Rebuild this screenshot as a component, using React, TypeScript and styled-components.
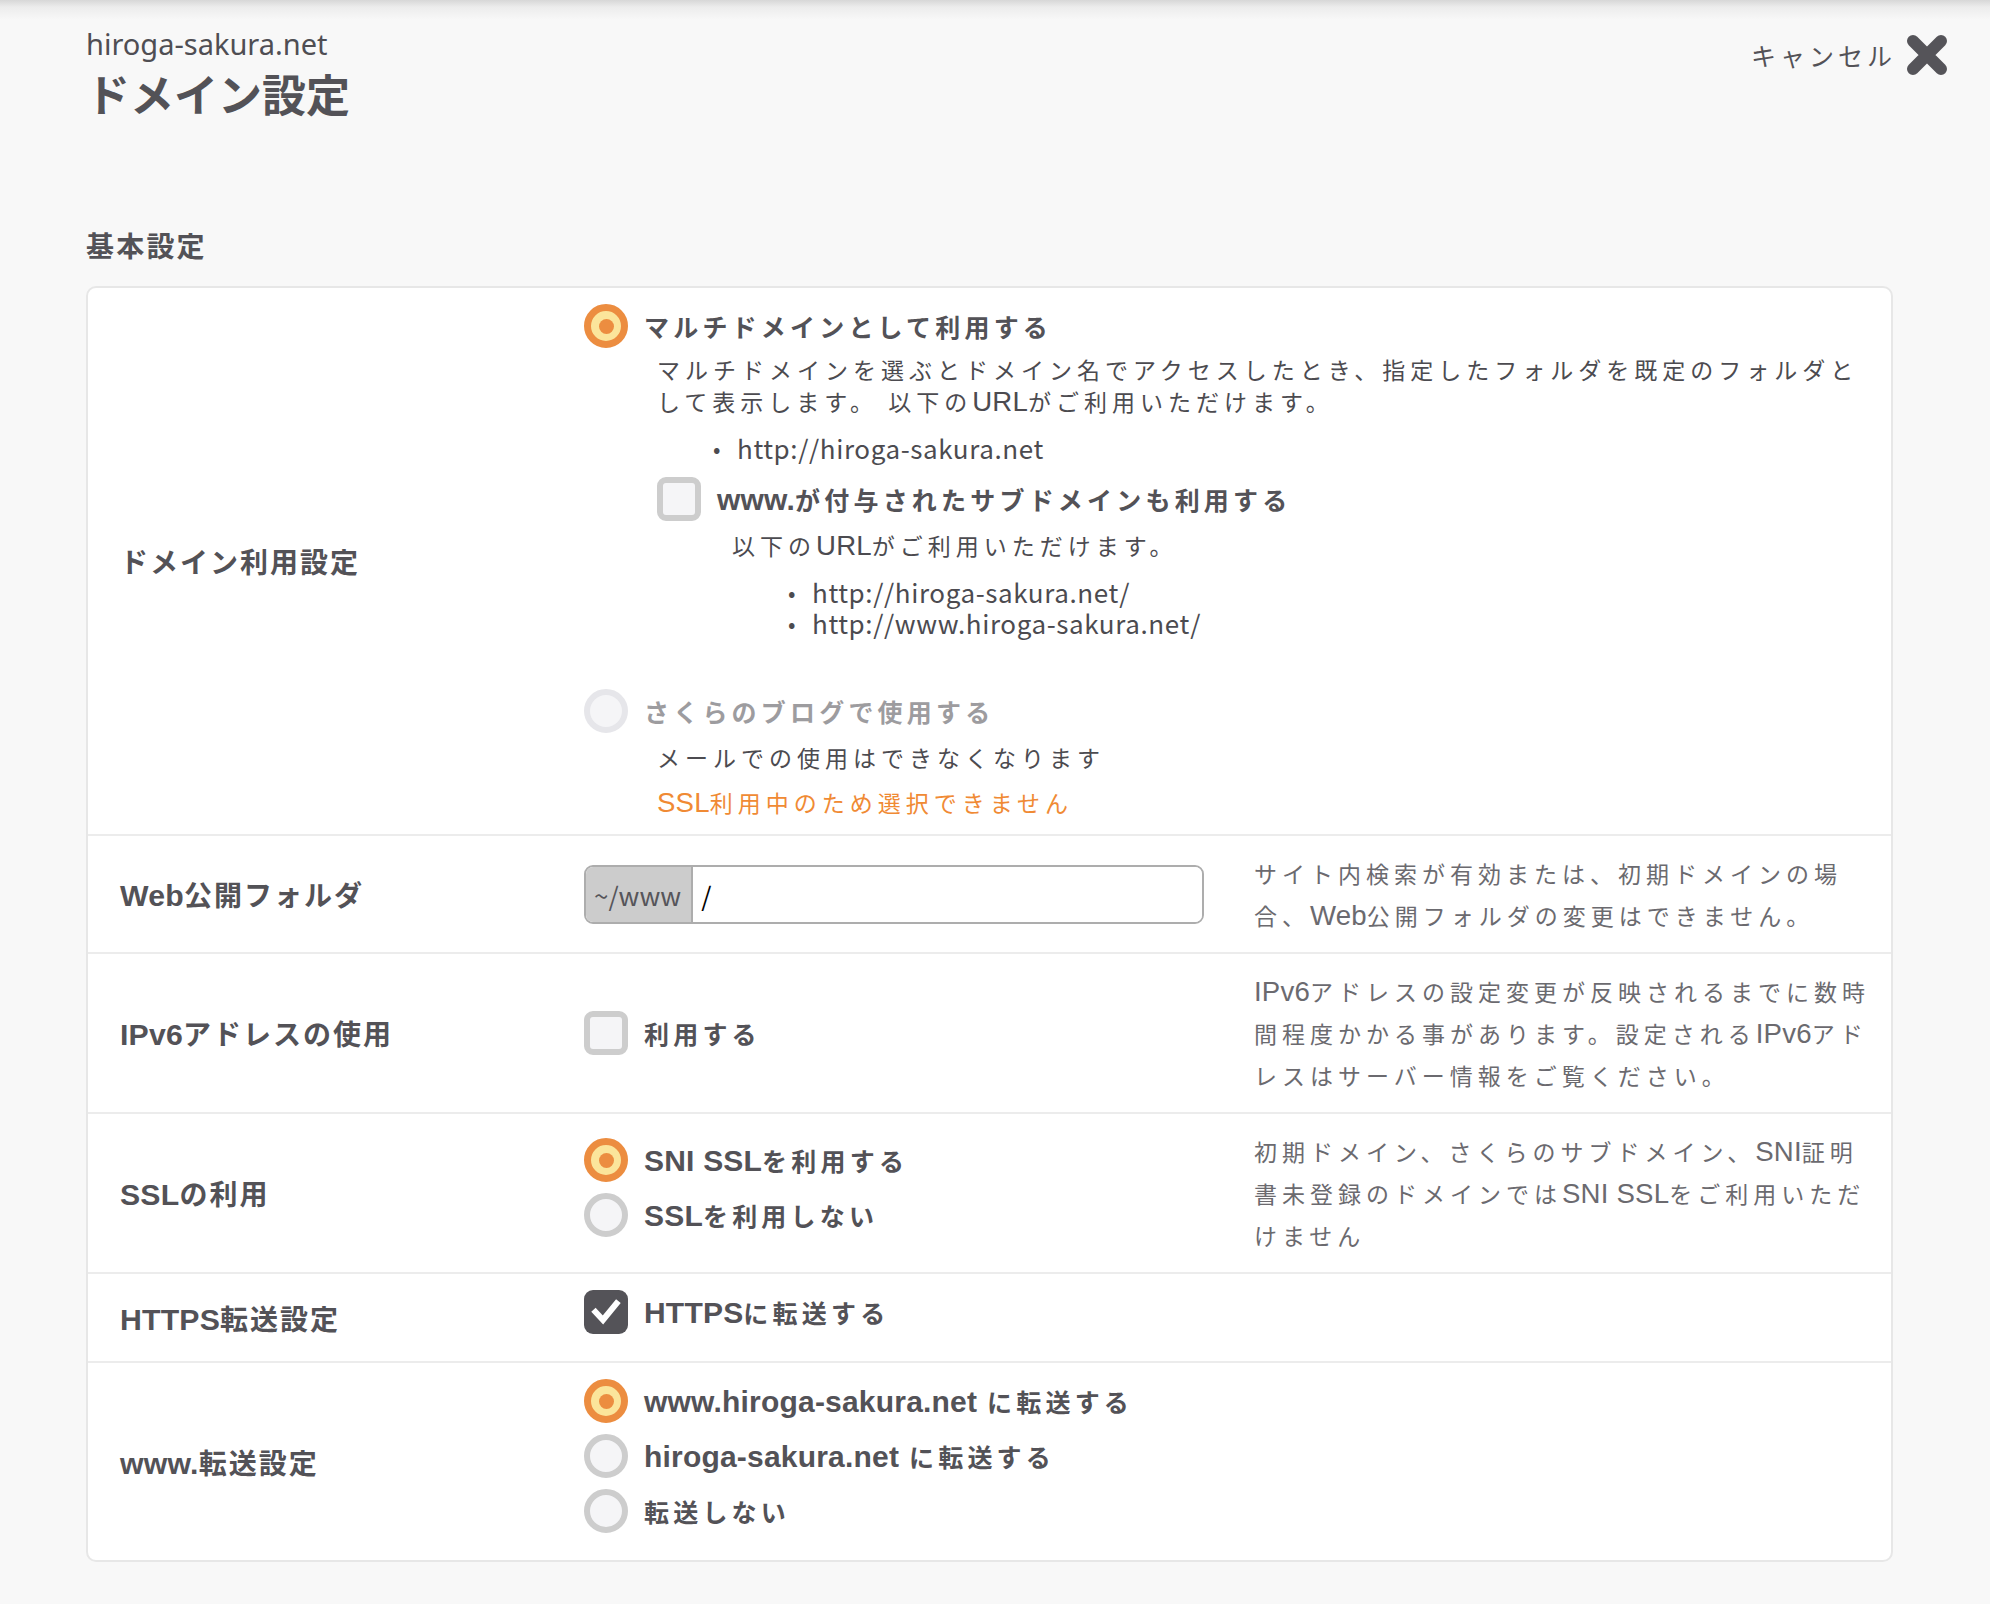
import React from 'react';
import styled, { createGlobalStyle } from 'styled-components';

const GlobalStyle = createGlobalStyle`
  html, body {
    margin: 0;
    background: #f8f8f8;
  }
  body {
    font-family: "Noto Sans CJK JP", "Noto Sans", sans-serif;
    color: #535257;
  }
  * { box-sizing: border-box; }
`;

type RadioState = 'on' | 'off' | 'disabled';

const CloseIcon = () => (
  <svg width="42" height="42" viewBox="0 0 42 42">
    <path d="M7 7 L35 35 M35 7 L7 35" stroke="#555459" strokeWidth="12" strokeLinecap="round" />
  </svg>
);

const CheckMark = () => (
  <svg width="32" height="32" viewBox="0 0 32 32">
    <path d="M5.5 16 L13 24 L26.5 7.5" stroke="#fff" strokeWidth="6" fill="none" strokeLinecap="square" />
  </svg>
);

export default function App() {
  return (
    <Page>
      <GlobalStyle />
      <Header>
        <div>
          <SiteName>hiroga-sakura.net</SiteName>
          <Title>ドメイン設定</Title>
        </div>
        <CancelButton type="button">
          <CancelLabel>キャンセル</CancelLabel>
          <CloseIcon />
        </CancelButton>
      </Header>

      <SectionTitle>基本設定</SectionTitle>

      <Card>
        <Row>
          <Label>ドメイン利用設定</Label>
          <Control $wide>
            <Choice>
              <Radio $state="on" />
              <ChoiceText>マルチドメインとして利用する</ChoiceText>
            </Choice>
            <Indent $left={73}>
              <Note $top={5}>
                マルチドメインを選ぶとドメイン名でアクセスしたとき、指定したフォルダを既定のフォルダとして表示します。 以下の<Latin>URL</Latin>がご利用いただけます。
              </Note>
              <UrlList $top={15}>
                <UrlItem>http://hiroga-sakura.net</UrlItem>
              </UrlList>
              <Choice $top={14}>
                <Checkbox />
                <ChoiceText>
                  <Latin>www.</Latin>が付与されたサブドメインも利用する
                </ChoiceText>
              </Choice>
              <Indent $left={75}>
                <Note $top={8}>
                  以下の<Latin>URL</Latin>がご利用いただけます。
                </Note>
                <UrlList $top={15}>
                  <UrlItem>http://hiroga-sakura.net/</UrlItem>
                  <UrlItem>http://www.hiroga-sakura.net/</UrlItem>
                </UrlList>
              </Indent>
            </Indent>
            <Choice $top={51}>
              <Radio $state="disabled" />
              <ChoiceText $muted>さくらのブログで使用する</ChoiceText>
            </Choice>
            <Indent $left={73}>
              <Note $top={8}>メールでの使用はできなくなります</Note>
              <Warning>
                <Latin>SSL</Latin>利用中のため選択できません
              </Warning>
            </Indent>
          </Control>
        </Row>

        <Row>
          <Label>
            <Latin $size={1.08}>Web</Latin>公開フォルダ
          </Label>
          <Control>
            <PathField>
              <PathPrefix>~/www</PathPrefix>
              <PathInput defaultValue="/" />
            </PathField>
          </Control>
          <Help>
            サイト内検索が有効または、初期ドメインの場合、<Latin>Web</Latin>公開フォルダの変更はできません。
          </Help>
        </Row>

        <Row>
          <Label>
            <Latin $size={1.08}>IPv6</Latin>アドレスの使用
          </Label>
          <Control>
            <ChoiceList $flush>
              <Choice>
                <Checkbox />
                <ChoiceText>利用する</ChoiceText>
              </Choice>
            </ChoiceList>
          </Control>
          <Help>
            <Latin>IPv6</Latin>アドレスの設定変更が反映されるまでに数時間程度かかる事があります。設定される<Latin>IPv6</Latin>アドレスはサーバー情報をご覧ください。
          </Help>
        </Row>

        <Row>
          <Label>
            <Latin $size={1.08}>SSL</Latin>の利用
          </Label>
          <Control>
            <ChoiceList>
              <Choice>
                <Radio $state="on" />
                <ChoiceText>
                  <Latin>SNI SSL</Latin>を利用する
                </ChoiceText>
              </Choice>
              <Choice>
                <Radio $state="off" />
                <ChoiceText>
                  <Latin>SSL</Latin>を利用しない
                </ChoiceText>
              </Choice>
            </ChoiceList>
          </Control>
          <Help>
            初期ドメイン、さくらのサブドメイン、<Latin>SNI</Latin>証明書未登録のドメインでは<Latin>SNI SSL</Latin>をご利用いただけません
          </Help>
        </Row>

        <Row>
          <Label>
            <Latin $size={1.08}>HTTPS</Latin>転送設定
          </Label>
          <Control>
            <ChoiceList>
              <Choice>
                <Checkbox $checked>
                  <CheckMark />
                </Checkbox>
                <ChoiceText>
                  <Latin>HTTPS</Latin>に転送する
                </ChoiceText>
              </Choice>
            </ChoiceList>
          </Control>
          <Help />
        </Row>

        <Row>
          <Label>
            <Latin $size={1.08}>www.</Latin>転送設定
          </Label>
          <Control>
            <ChoiceList>
              <Choice>
                <Radio $state="on" />
                <ChoiceText>
                  <Latin>www.hiroga-sakura.net</Latin> に転送する
                </ChoiceText>
              </Choice>
              <Choice>
                <Radio $state="off" />
                <ChoiceText>
                  <Latin>hiroga-sakura.net</Latin> に転送する
                </ChoiceText>
              </Choice>
              <Choice>
                <Radio $state="off" />
                <ChoiceText>転送しない</ChoiceText>
              </Choice>
            </ChoiceList>
          </Control>
          <Help />
        </Row>
      </Card>
    </Page>
  );
}

/* ----- STYLES ----- */

const Page = styled.div`
  min-height: 1604px;
  padding: 26px 97px 40px 86px;
  background: #f8f8f8 linear-gradient(to bottom, #d7d7d7 0, #ececec 7px, #f8f8f8 20px) no-repeat;
  background-size: 100% 20px;
`;

const Header = styled.header`
  display: flex;
  justify-content: space-between;
  align-items: flex-start;
  margin-right: -55px;
`;

const SiteName = styled.div`
  font-family: "Noto Sans", "Noto Sans CJK JP", sans-serif;
  font-size: 29px;
  line-height: 36px;
  color: #4f4e53;
`;

const Title = styled.h1`
  margin: 4px 0 0;
  font-size: 44px;
  line-height: 54px;
  font-weight: 700;
  color: #535257;
`;

const CancelButton = styled.button`
  display: flex;
  align-items: center;
  gap: 10px;
  margin-top: 8px;
  padding: 0;
  border: none;
  background: none;
  cursor: pointer;
  font-family: inherit;
`;

const CancelLabel = styled.span`
  font-size: 25px;
  letter-spacing: 4px;
  color: #535257;
`;

const SectionTitle = styled.h2`
  margin: 107px 0 23px;
  font-size: 28px;
  line-height: 36px;
  font-weight: 700;
  letter-spacing: 2.2px;
  color: #535257;
`;

const Card = styled.section`
  background: #fff;
  border: 2px solid #e7e7e7;
  border-radius: 10px;
`;

const Row = styled.div`
  display: grid;
  grid-template-columns: 496px 670px 1fr;
  & + & {
    border-top: 2px solid #ececec;
  }
`;

/* latin runs inside spaced japanese text: wider face, no tracking */
const Latin = styled.span<{ $size?: number }>`
  font-family: "Liberation Sans", "Noto Sans", sans-serif;
  font-size: ${(p) => p.$size ?? 1.2}em;
  line-height: 1;
  letter-spacing: 0.2px;
`;

const Label = styled.div`
  align-self: center;
  padding-left: 32px;
  font-size: 28px;
  line-height: 40px;
  font-weight: 700;
  letter-spacing: 2px;
  color: #535257;
`;

const Control = styled.div<{ $wide?: boolean }>`
  grid-column: ${(p) => (p.$wide ? '2 / -1' : 'auto')};
  align-self: center;
  padding: 16px ${(p) => (p.$wide ? '20px' : '0')} 16px 0;
`;

const Help = styled.p`
  margin: 0;
  align-self: center;
  padding: 16px 8px 16px 0;
  font-size: 23px;
  line-height: 42px;
  letter-spacing: 5px;
  color: #6b6a6f;
`;

const ChoiceList = styled.div<{ $flush?: boolean }>`
  display: flex;
  flex-direction: column;
  gap: 11px;
  padding-bottom: ${(p) => (p.$flush ? '0' : '11px')};
`;

const Choice = styled.label<{ $top?: number }>`
  display: flex;
  align-items: center;
  gap: 16px;
  margin-top: ${(p) => p.$top ?? 0}px;
`;

const Radio = styled.span<{ $state: RadioState }>`
  flex: none;
  display: flex;
  align-items: center;
  justify-content: center;
  width: 44px;
  height: 44px;
  border-radius: 50%;
  border: ${(p) => (p.$state === 'on' ? '7px solid #ec8d40' : p.$state === 'disabled' ? '6px solid #e6e6ea' : '6px solid #cdcdcd')};
  background: ${(p) => (p.$state === 'on' ? '#fbe59b' : '#f5f5f7')};

  &::after {
    content: '';
    display: ${(p) => (p.$state === 'on' ? 'block' : 'none')};
    width: 15px;
    height: 15px;
    border-radius: 50%;
    background: #ec8d40;
  }
`;

const Checkbox = styled.span<{ $checked?: boolean }>`
  flex: none;
  display: flex;
  align-items: center;
  justify-content: center;
  width: 44px;
  height: 44px;
  border-radius: 9px;
  border: ${(p) => (p.$checked ? 'none' : '6px solid #cdcdcd')};
  background: ${(p) => (p.$checked ? '#545358' : '#f5f5f7')};
`;

const ChoiceText = styled.span<{ $muted?: boolean }>`
  font-size: 25px;
  line-height: 34px;
  font-weight: 700;
  letter-spacing: 4.2px;
  color: ${(p) => (p.$muted ? '#9d9c9f' : '#535257')};
`;

const Indent = styled.div<{ $left: number }>`
  margin-left: ${(p) => p.$left}px;
`;

const Note = styled.p<{ $top?: number }>`
  margin: ${(p) => p.$top ?? 0}px 0 0;
  font-size: 23px;
  line-height: 32px;
  letter-spacing: 5px;
  color: #4c4b50;
`;

const Warning = styled(Note)`
  margin-top: 13px;
  color: #f08a34;
`;

const UrlList = styled.ul<{ $top?: number }>`
  list-style: none;
  margin: ${(p) => p.$top ?? 0}px 0 0 56px;
  padding: 0;
`;

const UrlItem = styled.li`
  display: flex;
  font-size: 26px;
  line-height: 31px;
  letter-spacing: 0.6px;
  color: #4c4b50;

  &::before {
    content: '•';
    flex: none;
    width: 24px;
    font-size: 22px;
  }
`;

const PathField = styled.div`
  display: flex;
  width: 620px;
  height: 59px;
  border: 2px solid #adadad;
  border-radius: 9px;
  overflow: hidden;
`;

const PathPrefix = styled.span`
  display: flex;
  align-items: center;
  padding: 0 10px 0 8px;
  background: #cccccc;
  border-right: 2px solid #adadad;
  font-size: 26px;
  color: #56555a;
`;

const PathInput = styled.input`
  flex: 1;
  min-width: 0;
  border: none;
  outline: none;
  padding: 0 8px;
  font-family: inherit;
  font-size: 26px;
  color: #000;
  background: #fff;
`;
